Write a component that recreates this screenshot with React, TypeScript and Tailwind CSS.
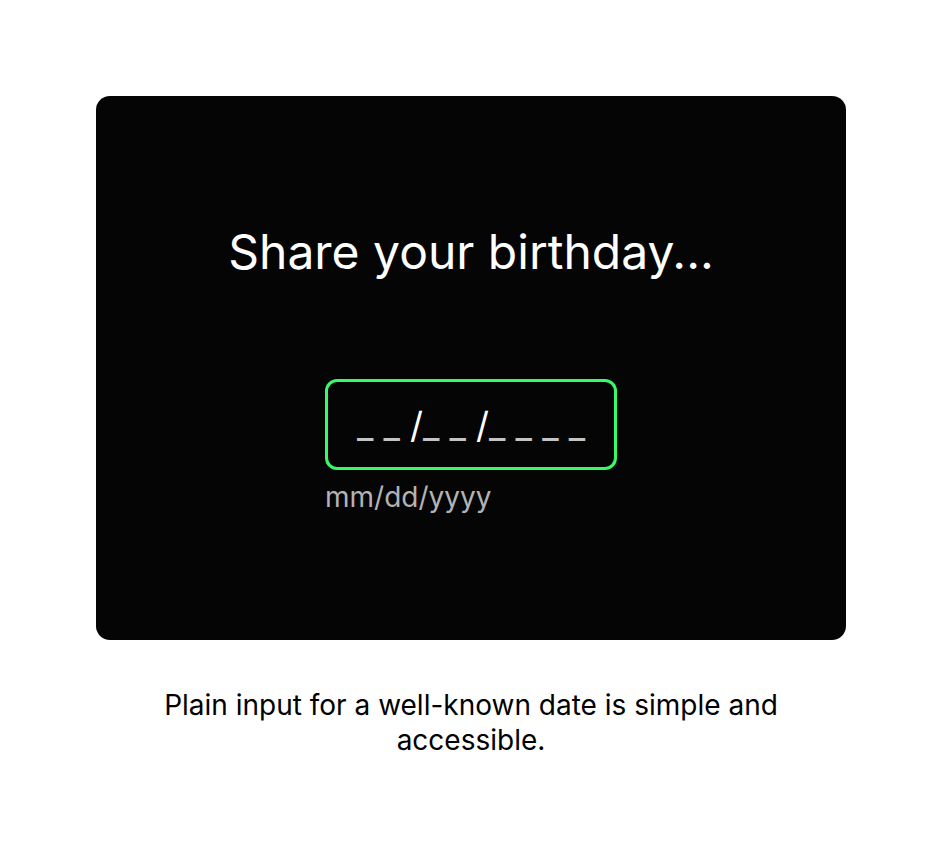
export default function App() {
  return (
    <div className="min-h-[852px] w-full bg-white flex flex-col items-center pt-24 font-['Inter',sans-serif]">
      <div className="w-[750px] h-[544px] rounded-[14px] bg-[#050505] flex flex-col items-center">
        <h1 className="mt-[127px] text-[48px] leading-[58px] text-white">Share your birthday...</h1>
        <div className="mt-[98px] flex flex-col items-start">
          <div className="w-[292px] h-[91px] rounded-[12px] border-[3px] border-[#36fb68] flex items-center justify-center">
            <span className="text-[36px] text-[#c4c4c4] whitespace-pre">
              _ _ <span className="text-white">/</span>_ _ <span className="text-white">/</span>_ _ _ _
            </span>
          </div>
          <span className="mt-[10px] text-[28px] leading-[34px] text-[#b3b3b3]">mm/dd/yyyy</span>
        </div>
      </div>
      <p className="mt-[48px] w-[640px] text-center text-[28px] leading-[35px] text-black">
        Plain input for a well-known date is simple and accessible.
      </p>
    </div>
  );
}
